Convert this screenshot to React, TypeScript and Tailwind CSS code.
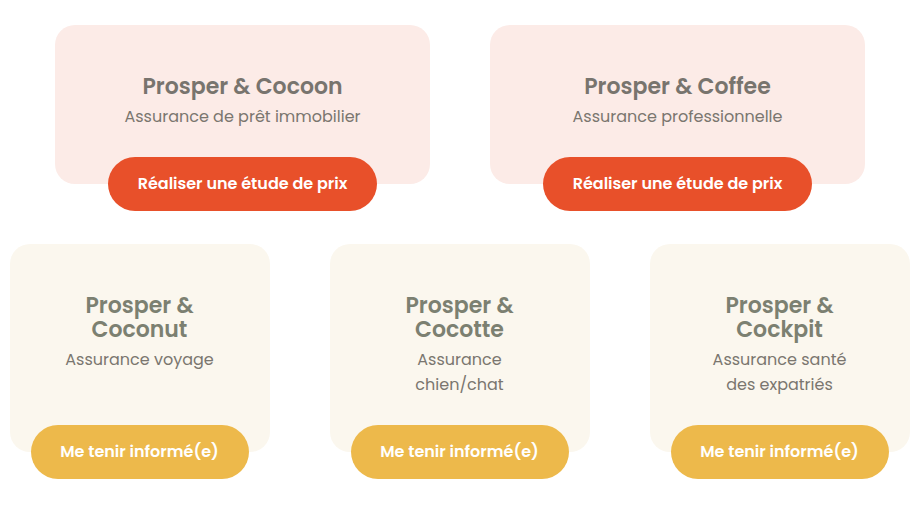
const FONT = 'font-["Poppins","Open_Sans",sans-serif]';

interface Product {
  name: string[];
  lines: string[];
}

const MAIN: Product[] = [
  { name: ['Prosper & Cocoon'], lines: ['Assurance de prêt immobilier'] },
  { name: ['Prosper & Coffee'], lines: ['Assurance professionnelle'] },
];

const SOON: Product[] = [
  { name: ['Prosper &', 'Coconut'], lines: ['Assurance voyage'] },
  { name: ['Prosper &', 'Cocotte'], lines: ['Assurance', 'chien/chat'] },
  { name: ['Prosper &', 'Cockpit'], lines: ['Assurance santé', 'des expatriés'] },
];

function MainCard({ p }: { p: Product }) {
  return (
    <div className="flex w-[375px] flex-col items-center">
      <div className="flex h-[159px] w-full flex-col items-center rounded-[20px] bg-[#fcebe7] pt-[50px] text-center">
        <h2 className="text-[22px] leading-[24px] font-semibold text-[#78746e]">{p.name[0]}</h2>
        <p className="mt-[5px] text-[16px] leading-[25px] text-[#7a766f]">{p.lines[0]}</p>
      </div>
      <button
        type="button"
        className="-mt-[27px] h-[54px] w-[269px] rounded-full bg-[#e8502a] text-[16px] font-semibold text-white"
      >
        Réaliser une étude de prix
      </button>
    </div>
  );
}

function SoonCard({ p }: { p: Product }) {
  return (
    <div className="flex w-[260px] flex-col items-center">
      <div className="flex h-[208px] w-full flex-col items-center rounded-[20px] bg-[#fbf7ee] pt-[50px] text-center">
        <h3 className="text-[22px] leading-[24px] font-semibold text-[#7c8071]">
          {p.name.map((n) => (
            <span key={n} className="block">
              {n}
            </span>
          ))}
        </h3>
        <p className="mt-[5px] text-[16px] leading-[25px] text-[#7a766f]">
          {p.lines.map((l) => (
            <span key={l} className="block">
              {l}
            </span>
          ))}
        </p>
      </div>
      <button
        type="button"
        className="-mt-[27px] h-[54px] w-[218px] rounded-full bg-[#edb94b] text-[16px] font-semibold text-white"
      >
        Me tenir informé(e)
      </button>
    </div>
  );
}

export default function App() {
  return (
    <main className={`${FONT} h-[522px] w-[915px] bg-white pt-[25px]`}>
      <div className="flex gap-[60px] pl-[55px]">
        {MAIN.map((p) => (
          <MainCard key={p.name[0]} p={p} />
        ))}
      </div>
      <div className="mt-[33px] flex gap-[60px] pl-[9.5px]">
        {SOON.map((p) => (
          <SoonCard key={p.name[1]} p={p} />
        ))}
      </div>
    </main>
  );
}
